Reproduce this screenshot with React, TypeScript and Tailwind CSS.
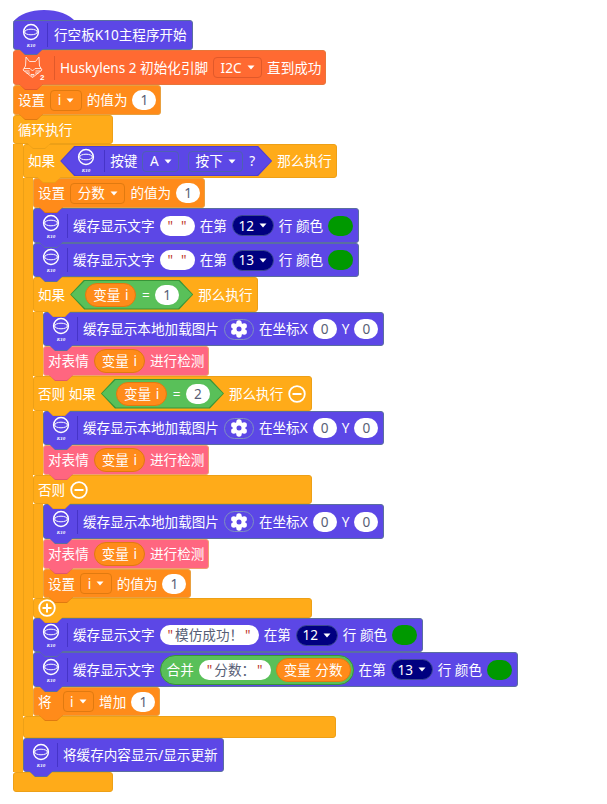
import { FC, PropsWithChildren, ReactNode } from "react";

type BlockProps = PropsWithChildren<{ className: string; tab?: boolean; tabClass?: string; tabEdge?: string; arm?: boolean }>;

// the connector under a block: darker outer shape with the fill shifted up 1px
const Tab: FC<{ className: string; edge: string; arm?: boolean }> = ({ className, edge, arm }) => (
  <div className={`absolute bottom-[-6px] z-10 h-[6px] w-[24px] [clip-path:polygon(0_0,100%_0,calc(100%-6px)_100%,6px_100%)] ${arm ? "left-[13px]" : "left-[5px]"} ${edge}`}>
    <div className={`h-[5px] w-[24px] [clip-path:polygon(0_0,100%_0,calc(100%-6px)_100%,6px_100%)] ${className}`} />
  </div>
);

const Block: FC<BlockProps> = ({ className, tab = true, tabClass, tabEdge, arm, children }) => (
  <div className={`relative flex shrink-0 items-center rounded-[3px] border text-white ${className}`}>
    {children}
    {tab && <Tab className={tabClass ?? ""} edge={tabEdge ?? ""} arm={arm} />}
  </div>
);

const PURPLE = "bg-[#5c47e6] border-[#5a6fa0]";
const ORANGE = "bg-[#ff8b1a] border-[#e8a040]";
const YELLOW = "bg-[#ffab19] border-[#eda017]";
const PINK = "bg-[#ff6680] border-[#f0a070]";
const TAB_PURPLE = "bg-[#5c47e6]";
const TAB_ORANGE = "bg-[#ff8b1a]";
const TAB_PINK = "bg-[#ff6680]";
const TAB_YELLOW = "bg-[#ffab19]";

const K10Icon: FC = () => (
  <svg width="24" height="28" viewBox="0 0 24 28" className="shrink-0">
    <circle cx="12" cy="10" r="7.4" fill="none" stroke="#fff" strokeWidth="1.5" />
    <ellipse cx="12" cy="10" rx="6.4" ry="2.8" fill="none" stroke="#fff" strokeWidth="1" />
    <text x="12" y="25" textAnchor="middle" fontSize="5" fontStyle="italic" fontWeight="700" fill="#fff" fontFamily="Liberation Serif, serif">K10</text>
  </svg>
);

const FoxIcon: FC = () => (
  <svg width="26" height="26" viewBox="0 0 26 26" className="shrink-0">
    <g fill="none" stroke="#fff" strokeWidth="0.8" strokeLinejoin="round">
      <path d="M5 2 L8.5 6.5 H14.5 L18 2 L18.5 11 L21 15 L11.500 22.500 L2 15 L4.500 11 Z" />
      <path d="M3 13.500 H9 L11.500 16 L14 13.500 H20" />
      <path d="M3.500 16 H8.500 M14.500 16 H19.500 M5.500 18 H9 M14 18 H17.500" />
      <path d="M9.800 19.500 H13.200 L11.500 21 Z" />
    </g>
    <text x="19" y="25" fontSize="8" fontWeight="700" fill="#fff" fontFamily="Liberation Sans, sans-serif">2</text>
  </svg>
);

const GearIcon: FC = () => {
  const lobes = [0, 60, 120, 180, 240, 300];
  return (
    <svg width="18" height="18" viewBox="0 0 18 18">
      <circle cx="9" cy="9" r="6.2" fill="#fff" />
      {lobes.map((a) => (
        <circle key={a} cx={9 + 6 * Math.cos((a * Math.PI) / 180 + Math.PI / 2)} cy={9 + 6 * Math.sin((a * Math.PI) / 180 + Math.PI / 2)} r="2.7" fill="#fff" />
      ))}
      <circle cx="9" cy="9" r="2.5" fill="#5c47e6" />
    </svg>
  );
};

const Caret: FC = () => (
  <svg width="8" height="5" viewBox="0 0 8 5" className="ml-[5px] shrink-0">
    <path d="M0.5 0.5 H7.5 L4 4.5 Z" fill="#fff" />
  </svg>
);

const Dropdown: FC<{ className: string; label: string }> = ({ className, label }) => (
  <span className={`flex h-[21px] items-center rounded-[4px] border px-[6.5px] ${className}`}>
    {label}
    <Caret />
  </span>
);

const Num: FC<{ v: string }> = ({ v }) => (
  <span className="flex h-[20px] w-[24px] shrink-0 items-center justify-center rounded-full bg-white text-[#575e75]">{v}</span>
);

const Str: FC<{ v?: string }> = ({ v = "" }) => (
  <span className="flex h-[20px] items-center gap-[2px] rounded-full bg-white px-[8px] text-[#575e75]">
    <span className="text-[#c0392b]">"</span>
    <span className={v ? "" : "w-[4px]"}>{v}</span>
    <span className="text-[#c0392b]">"</span>
  </span>
);

const RowPill: FC<{ v: string }> = ({ v }) => (
  <span className="flex h-[21px] w-[42px] shrink-0 items-center justify-center rounded-full border border-[#3c4a90] bg-[#000080]">
    {v}
    <Caret />
  </span>
);

const Swatch: FC = () => <span className="h-[20px] w-[25px] shrink-0 rounded-full bg-[#009900]" />;

const Var: FC<{ label: string }> = ({ label }) => (
  <span className="flex h-[24px] items-center rounded-full border border-[#e07a10] bg-[#ff8b1a] px-[7px] text-white [word-spacing:1px]">{label}</span>
);

const KBlock: FC<PropsWithChildren<{ className: string; tab?: boolean }>> = ({ className, tab = true, children }) => (
  <Block className={`${PURPLE} ${className}`} tab={tab} tabClass={TAB_PURPLE} tabEdge="bg-[#5a6fa0]">
    <span className="flex w-[33px] justify-center pt-[2px]">
      <K10Icon />
    </span>
    <span className="h-[24px] w-[1px] shrink-0 bg-[#4634c8]" />
    <span className="flex items-center gap-[5px] pr-[5px] pl-[5px]">{children}</span>
  </Block>
);

const BufferText: FC<{ value: ReactNode; row: string; height: string }> = ({ value, row, height }) => (
  <KBlock className={height}>
    <span>缓存显示文字</span>
    {value}
    <span>在第</span>
    <RowPill v={row} />
    <span>行 颜色</span>
    <Swatch />
  </KBlock>
);

const ImageBlock: FC<{ height: string }> = ({ height }) => (
  <KBlock className={height}>
    <span>缓存显示本地加载图片</span>
    <span className="flex h-[21px] w-[30px] items-center justify-center rounded-full border border-[#7f8fc0]">
      <GearIcon />
    </span>
    <span>在坐标X</span>
    <Num v="0" />
    <span>Y</span>
    <Num v="0" />
  </KBlock>
);

const Reaction: FC<{ height: string }> = ({ height }) => (
  <Block className={`${PINK} ${height} gap-[5px] px-[4px]`} tabClass={TAB_PINK} tabEdge="bg-[#e0566e]">
    <span>对表情</span>
    <Var label="变量 i" />
    <span>进行检测</span>
  </Block>
);

const Hex: FC<{ className: string; inner: string; children: ReactNode }> = ({ className, inner, children }) => (
  <span className={`flex [clip-path:polygon(14px_0,calc(100%-14px)_0,100%_50%,calc(100%-14px)_100%,14px_100%,0_50%)] p-[1px] ${className}`}>
    <span className={`flex h-full items-center [clip-path:polygon(14px_0,calc(100%-14px)_0,100%_50%,calc(100%-14px)_100%,14px_100%,0_50%)] ${inner}`}>
      {children}
    </span>
  </span>
);

const Compare: FC<{ v: string }> = ({ v }) => (
  <Hex className="h-[30px] bg-[#389438]" inner="gap-[5.5px] bg-[#59c059] pr-[13px] pl-[14px]">
    <Var label="变量 i" />
    <span>=</span>
    <Num v={v} />
  </Hex>
);

const Arm: FC<PropsWithChildren> = ({ children }) => (
  <div className="flex items-stretch">
    <div className="w-[10px] shrink-0 border-l border-[#eda017] bg-[#ffab19]" />
    <div className="flex flex-col items-start">{children}</div>
  </div>
);

const CircleBtn: FC<{ plus?: boolean }> = ({ plus }) => (
  <svg width="18" height="18" viewBox="0 0 18 18" className="shrink-0">
    <circle cx="9" cy="9" r="7.8" fill="none" stroke="#fff" strokeWidth="1.8" />
    <path d={plus ? "M4.5 9 H13.5 M9 4.5 V13.5" : "M4.5 9 H13.5"} stroke="#fff" strokeWidth="2" />
  </svg>
);

const SetVar: FC<{ name: string; height: string }> = ({ name, height }) => (
  <Block className={`${ORANGE} ${height} gap-[5px] px-[4px]`} tabClass={TAB_ORANGE} tabEdge="bg-[#e07a10]">
    <span>设置</span>
    <Dropdown className="border-[#e07a10]" label={name} />
    <span>的值为</span>
    <Num v="1" />
  </Block>
);

const YELLOW_TAB = { tabClass: TAB_YELLOW, tabEdge: "bg-[#eda017]" };

export default function App() {
  return (
    <main className="flex h-[804px] w-[607px] flex-col items-start overflow-hidden bg-white pt-[20px] pl-[13px] font-['Noto_Sans','Noto_Sans_CJK_SC',sans-serif] text-[13.6px] leading-none whitespace-nowrap">
      <div className="relative">
        <svg width="64" height="12" viewBox="0 0 64 12" className="absolute top-[-10px] left-0">
          <path d="M0 12 C6 4 18 0 31 0 C45 0 56 4 63 12 Z" fill="#5c47e6" />
        </svg>
        <KBlock className="h-[30px]">
          <span className="pl-[1px]">行空板K10主程序开始</span>
        </KBlock>
      </div>

      <Block className="h-[35px] border-[#e8763a] bg-[#ff6a32]" tabClass="bg-[#ff6a32]" tabEdge="bg-[#e0592a]">
        <span className="flex w-[40px] justify-center">
          <FoxIcon />
        </span>
        <span className="h-[24px] w-[1px] shrink-0 bg-[#e0592a]" />
        <span className="flex items-center gap-[5px] pr-[4px] pl-[5px]">
          <span>Huskylens 2 初始化引脚</span>
          <Dropdown className="border-[#e0592a]" label="I2C" />
          <span>直到成功</span>
        </span>
      </Block>

      <SetVar name="i" height="h-[30px]" />

      {/* 循环执行 */}
      <Block className={`${YELLOW} h-[29px] w-[100px] px-[4px]`} arm {...YELLOW_TAB}>
        <span>循环执行</span>
      </Block>
      <Arm>
        {/* 如果 按键 A */}
        <Block className={`${YELLOW} h-[34px] gap-[5px] px-[4px]`} arm {...YELLOW_TAB}>
          <span>如果</span>
          <Hex className="h-[30px] bg-[#4f3fd0]" inner="bg-[#5c47e6] pr-[16px] pl-[13px]">
            <K10Icon />
            <span className="mr-[5px] ml-[6px] h-[22px] w-[1px] bg-[#4634c8]" />
            <span className="mr-[5px]">按键</span>
            <Dropdown className="mr-[9px] border-[#4f61b0]" label="A" />
            <Dropdown className="mr-[6px] border-[#4f61b0]" label="按下" />
            <span>?</span>
          </Hex>
          <span>那么执行</span>
        </Block>
        <Arm>
          <SetVar name="分数" height="h-[30px]" />
          <BufferText value={<Str />} row="12" height="h-[35px]" />
          <BufferText value={<Str />} row="13" height="h-[34px]" />

          {/* 如果 变量 i = 1 */}
          <Block className={`${YELLOW} h-[35px] gap-[5px] px-[4px]`} arm {...YELLOW_TAB}>
            <span>如果</span>
            <Compare v="1" />
            <span>那么执行</span>
          </Block>
          <Arm>
            <ImageBlock height="h-[34px]" />
            <Reaction height="h-[30px]" />
          </Arm>

          <Block className={`${YELLOW} h-[35px] w-[279px] gap-[5px] px-[4px]`} arm {...YELLOW_TAB}>
            <span>否则 如果</span>
            <Compare v="2" />
            <span>那么执行</span>
            <CircleBtn />
          </Block>
          <Arm>
            <ImageBlock height="h-[34px]" />
            <Reaction height="h-[30px]" />
          </Arm>

          <Block className={`${YELLOW} h-[29px] w-[279px] gap-[5px] px-[4px]`} arm {...YELLOW_TAB}>
            <span>否则</span>
            <CircleBtn />
          </Block>
          <Arm>
            <ImageBlock height="h-[35px]" />
            <Reaction height="h-[30px]" />
            <SetVar name="i" height="h-[29px]" />
          </Arm>

          <Block className={`${YELLOW} h-[20px] w-[279px] px-[4px]`} {...YELLOW_TAB}>
            <CircleBtn plus />
          </Block>

          <BufferText value={<Str v="模仿成功！" />} row="12" height="h-[34px]" />
          <BufferText
            value={
              <span className="flex h-[30px] items-center gap-[5px] rounded-full border border-[#389438] bg-[#59c059] pr-[2px] pl-[6px]">
                <span>合并</span>
                <Str v="分数：" />
                <Var label="变量 分数" />
              </span>
            }
            row="13"
            height="h-[35px]"
          />

          <Block className={`${ORANGE} h-[29px] gap-[5px] px-[4px]`} tabClass={TAB_ORANGE} tabEdge="bg-[#e07a10]">
            <span className="mr-[6px]">将</span>
            <Dropdown className="border-[#e07a10]" label="i" />
            <span>增加</span>
            <Num v="1" />
          </Block>
        </Arm>
        <Block className={`${YELLOW} h-[22px] w-[313px]`} tab={false} />
        <KBlock className="h-[34px]">
          <span>将缓存内容显示/显示更新</span>
        </KBlock>
      </Arm>
      <Block className={`${YELLOW} h-[20px] w-[100px]`} tab={false} />
    </main>
  );
}
